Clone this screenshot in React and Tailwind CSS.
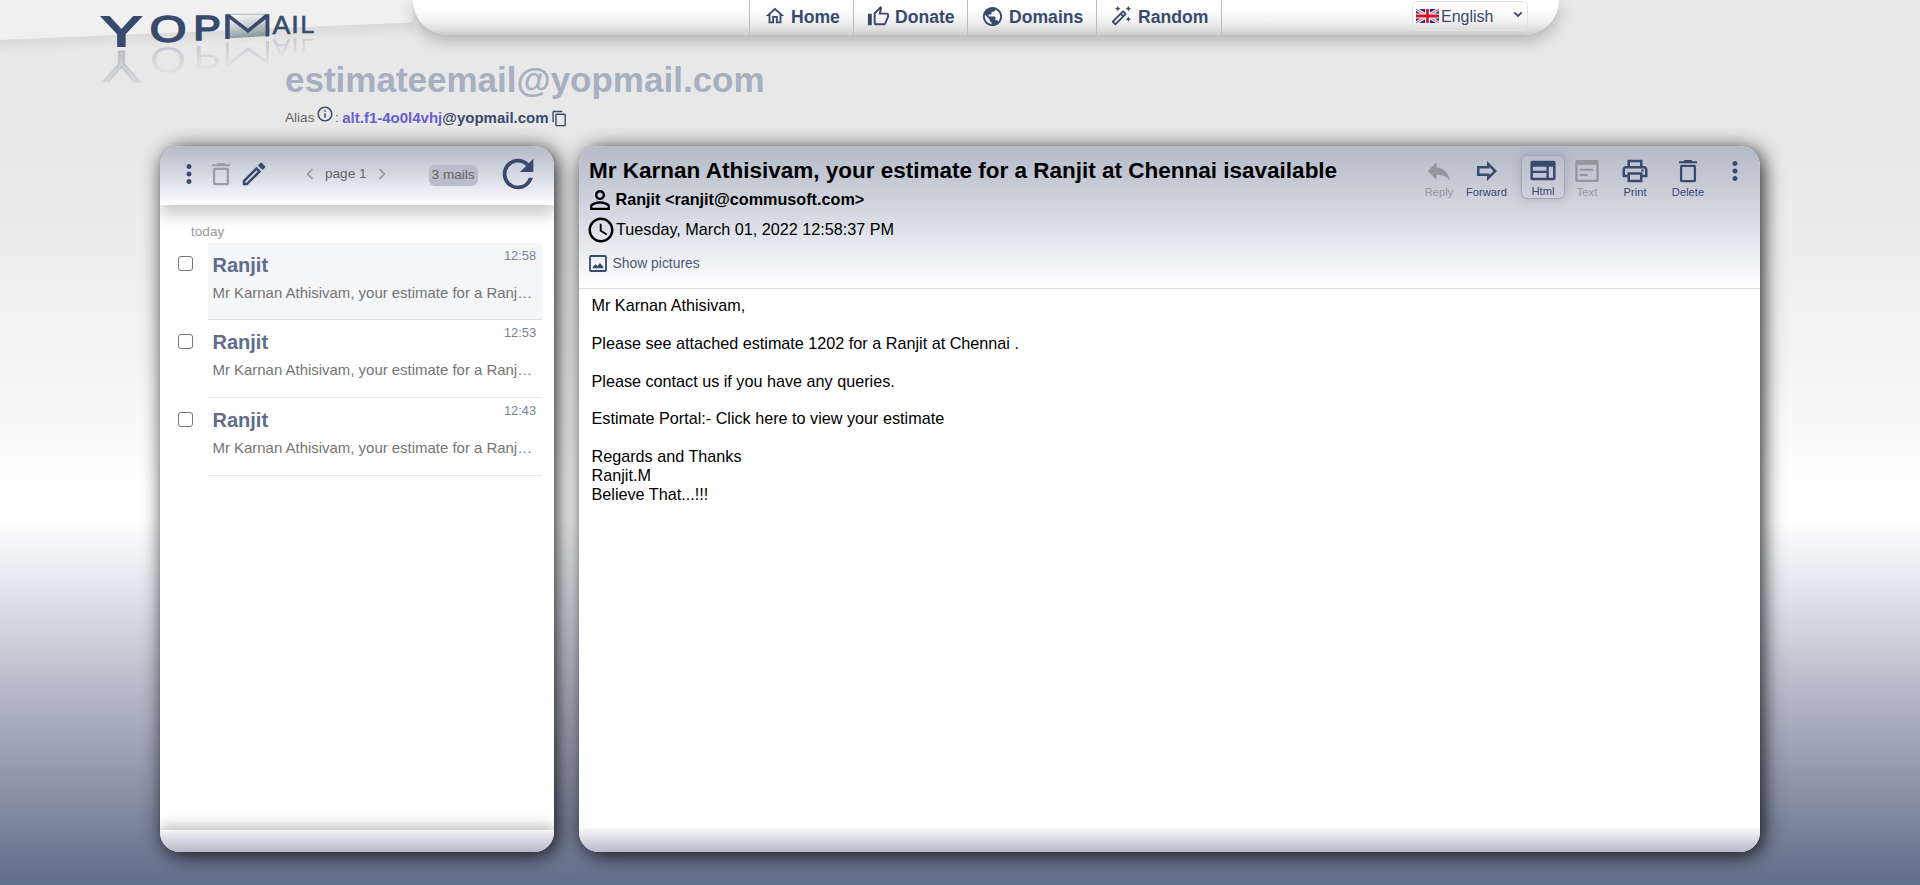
import React from "react";
import {
  MdOutlineHome,
  MdPublic,
  MdOutlineAutoFixHigh,
  MdMoreVert,
  MdOutlineEdit,
  MdChevronLeft,
  MdChevronRight,
  MdRefresh,
  MdOutlineInfo,
  MdContentCopy,
  MdPersonOutline,
  MdSchedule,
  MdReply,
  MdOutlineForward,
  MdOutlinePrint,
} from "react-icons/md";

const logoLetters = [
  { ch: "Y", x: 101.2, y: 45.5, size: 42, sx: 1.44, bold: false, stroke: 2, gap: 5, k: 1.05 },
  { ch: "O", x: 149.8, y: 42.3, size: 37, sx: 1.27, bold: false, stroke: 1.6, gap: 5, k: 0.98 },
  { ch: "P", x: 193.6, y: 40, size: 34.6, sx: 1.18, bold: false, stroke: 1.6, gap: 6, k: 0.9 },
  { ch: "A", x: 272.6, y: 34.4, size: 26, sx: 1.03, bold: false, stroke: 0.6, gap: 5, k: 0.9 },
  { ch: "I", x: 291.3, y: 33.4, size: 24.5, sx: 1.1, bold: false, stroke: 0.6, gap: 5, k: 0.9 },
  { ch: "L", x: 300.6, y: 32.5, size: 23.3, sx: 1.06, bold: false, stroke: 0.6, gap: 6, k: 0.9 },
];

function Logo() {
  return (
    <svg width="413" height="100" viewBox="0 0 413 100" className="block shrink-0" role="img" aria-label="YOPMail">
      <defs>
        <linearGradient id="edge" gradientUnits="userSpaceOnUse" x1="0" y1="40" x2="0.6" y2="54">
          <stop offset="0" stopColor="#dadada" />
          <stop offset="1" stopColor="#e8e8e8" />
        </linearGradient>
        <linearGradient id="mirror" x1="0" y1="0.8" x2="0" y2="0.1">
          <stop offset="0" stopColor="#7d879c" stopOpacity="0.3" />
          <stop offset="1" stopColor="#7d879c" stopOpacity="0.03" />
        </linearGradient>
        <linearGradient id="mirrorY" x1="0" y1="0.8" x2="0" y2="0.1">
          <stop offset="0" stopColor="#7d879c" stopOpacity="0.36" />
          <stop offset="1" stopColor="#7d879c" stopOpacity="0.12" />
        </linearGradient>
        <linearGradient id="mirrorM" gradientUnits="userSpaceOnUse" x1="0" y1="40" x2="0" y2="66">
          <stop offset="0" stopColor="#7d879c" stopOpacity="0.32" />
          <stop offset="1" stopColor="#7d879c" stopOpacity="0.06" />
        </linearGradient>
        <linearGradient id="paper" x1="0" y1="0" x2="0.3" y2="1">
          <stop offset="0" stopColor="#ffffff" />
          <stop offset="0.45" stopColor="#d3d7d9" />
          <stop offset="1" stopColor="#8f9a9c" />
        </linearGradient>
      </defs>
      <polygon points="0,0 413,0 413,22.5 0,40" fill="#f0f0f0" />
      <polygon points="0,40 413,22.5 413,38 0,55" fill="url(#edge)" />
      <g fontFamily="Liberation Sans, Arial, sans-serif">
        {logoLetters.map((l) => (
          <g key={l.ch}>
            <g
              fill="#384a6e"
              stroke="#384a6e"
              strokeWidth={l.stroke}
              transform={`translate(${l.x} ${l.y}) scale(${l.sx} 1)`}
            >
              <text id={"logo-" + l.ch} fontSize={l.size} fontWeight={l.bold ? 700 : 400}>
                {l.ch}
              </text>
            </g>
            <use
              href={"#logo-" + l.ch}
              fill={l.ch === "Y" ? "url(#mirrorY)" : "url(#mirror)"}
              stroke={l.ch === "Y" ? "url(#mirrorY)" : "none"}
              transform={`translate(${l.x} ${l.y + l.gap}) scale(${l.sx} ${-l.k})`}
            />
          </g>
        ))}
      </g>
      <polygon points="226,14.5 269,14.5 269,36 226,38.5" fill="url(#paper)" />
      <path d="M226 14.3H269" stroke="#9aa1a8" strokeWidth="0.8" />
      <path d="M225.2 39V14.3H229.5L248 28.8L265.3 14.3H269.4V36.3L265.6 36.6V19.3L248 32.9L229.7 19V38.8Z" fill="#384a6e" />
      <path d="M227.3 42.5V65L248 49L267.5 62.5V41" fill="none" stroke="url(#mirrorM)" strokeWidth="3" />
    </svg>
  );
}

function ThumbUp() {
  return (
    <svg width="23" height="23" viewBox="0 0 24 24" fill="currentColor">
      <path d="M9 21h9c.83 0 1.54-.5 1.84-1.22l3.02-7.05c.09-.23.14-.47.14-.73v-2c0-1.1-.9-2-2-2h-6.31l.95-4.57.03-.32c0-.41-.17-.79-.44-1.06L14.17 1 7.58 7.59C7.22 7.95 7 8.45 7 9v10c0 1.1.9 2 2 2zM9 9l4.34-4.34L12 10h9v2l-3 7H9V9zM1 9h4v12H1z" />
    </svg>
  );
}

function TrashIcon() {
  return (
    <svg width="30" height="30" viewBox="0 0 30 30" className="shrink-0">
      <path d="M11.5 4H18.5L19.5 5.200H24V7.300H6V5.200H10.500Z" fill="currentColor" />
      <rect x="8.100" y="9.900" width="13.800" height="15.200" rx="0.800" fill="none" stroke="currentColor" strokeWidth="2.300" />
    </svg>
  );
}

function HtmlIcon() {
  return (
    <svg width="30" height="30" viewBox="0 0 30 30" fill="currentColor">
      <path
        fillRule="evenodd"
        d="M4 5H26A2 2 0 0 1 28 7V23A2 2 0 0 1 26 25H4A2 2 0 0 1 2 23V7A2 2 0 0 1 4 5ZM4.600 11V15.200H18.600V11ZM4.600 17.500V22.500H18.600V17.500ZM21 11V22.500H25.400V11Z"
      />
    </svg>
  );
}

function TextIcon() {
  return (
    <svg width="30" height="30" viewBox="0 0 30 30" fill="currentColor">
      <path
        fillRule="evenodd"
        d="M5.300 4H24.700A2 2 0 0 1 26.700 6V24A2 2 0 0 1 24.700 26H5.300A2 2 0 0 1 3.300 24V6A2 2 0 0 1 5.300 4ZM5.600 8.800V23.800H24.400V8.800ZM7.700 12.700H21V14.800H7.700ZM7.700 17.900H15.700V20H7.700Z"
      />
    </svg>
  );
}

function PictureIcon() {
  return (
    <svg width="18" height="17" viewBox="0 0 18 17">
      <rect x="1" y="1" width="16" height="15" rx="1" fill="none" stroke="currentColor" strokeWidth="1.800" />
      <path d="M3.800 13.200V11.700L6.600 9.300L8.600 11L11 8L14.200 11.800V13.200Z" fill="currentColor" />
    </svg>
  );
}

function Flag() {
  return (
    <svg width="23" height="14" viewBox="0 0 24 14" preserveAspectRatio="none" className="shrink-0">
      <rect width="24" height="14" fill="#1d2f86" />
      <path d="M0 0L24 14M24 0L0 14" stroke="#fff" strokeWidth="3.200" />
      <path d="M0 0L24 14M24 0L0 14" stroke="#e0304a" strokeWidth="1" />
      <path d="M12 0V14M0 7H24" stroke="#fff" strokeWidth="5" />
      <path d="M12 0V14M0 7H24" stroke="#d80f2c" strokeWidth="2.800" />
    </svg>
  );
}

function NavItem({ icon, label, className }) {
  return (
    <a className={"flex h-[35px] items-start border-l border-[#bdbdbd] pt-[5px] " + className}>
      {icon}
      <span className="pt-[1px] text-[17.6px] font-bold leading-[23px]">{label}</span>
    </a>
  );
}

const mails = [
  { time: "12:58", active: true },
  { time: "12:53", active: false },
  { time: "12:43", active: false },
];

function MailRow({ time, active }) {
  return (
    <div className="flex h-[77.8px]">
      <div className="w-[48px] shrink-0 pl-[18px] pt-[13.5px]">
        <div className="h-[15px] w-[15px] rounded-[3px] border border-[#767676] bg-white" />
      </div>
      <div
        className={
          "flex w-[334px] items-start border-b pl-[4.5px] pr-[6px] " +
          (active ? "border-[#dadee3] bg-[#f4f6f8]" : "border-[#e4e6e8]")
        }
      >
        <div className="w-[291.5px] pt-[10px]">
          <div className="text-[20px] font-bold leading-[24px] text-[#5f6c8a]">Ranjit</div>
          <div className="mt-[6px] whitespace-nowrap text-[14.95px] leading-[20px] text-[#757575]">
            Mr Karnan Athisivam, your estimate for a Ranj…
          </div>
        </div>
        <div className="pt-[5px] text-[12.8px] leading-[16px] text-[#77809b]">{time}</div>
      </div>
    </div>
  );
}

function Action({ icon, label, className }) {
  return (
    <div className={"flex h-[44px] flex-col items-center " + className}>
      {icon}
      <span className="text-[11.2px] leading-[13px]">{label}</span>
    </div>
  );
}

const panel =
  "flex h-[706px] flex-col overflow-hidden rounded-[20px] bg-white shadow-[3px_3px_20px_rgba(0,0,0,0.88)]";

export default function App() {
  return (
    <div className="h-[885px] w-[1920px] overflow-hidden bg-[linear-gradient(to_bottom,#e8e8e8_0px,#e8e8e8_150px,#f3f3f3_350px,#ffffff_490px,#ffffff_520px,#eceef2_565px,#d7dae2_615px,#b0b6c5_700px,#8c94a9_785px,#78829b_830px,#626d89_885px)] font-['Liberation_Sans',Arial,sans-serif] text-[#384a6e]">
      <header className="flex h-[52px] items-start">
        <Logo />
        <nav className="relative flex h-[35px] w-[1146px] shrink-0 rounded-b-[35px] bg-[linear-gradient(to_bottom,#ffffff_0%,#fdfdfd_30%,#f2f2f2_60%,#e2e2e2_80%,#cbcbcb_100%)] pl-[336px] shadow-[0_6px_16px_rgba(0,0,0,0.24)]">
          <NavItem className="w-[104px] pl-[14px]" icon={<MdOutlineHome className="mr-[5px] h-[22px] w-[22px]" />} label="Home" />
          <NavItem className="w-[114px] pl-[13px]" icon={<span className="mr-[5px]"><ThumbUp /></span>} label="Donate" />
          <NavItem className="w-[129px] pl-[13px]" icon={<MdPublic className="mr-[5px] h-[23px] w-[23px]" />} label="Domains" />
          <NavItem className="w-[126px] border-r pl-[13px]" icon={<MdOutlineAutoFixHigh className="mr-[6px] h-[22px] w-[22px]" />} label="Random" />
          <div className="ml-[190px] mt-[1px] flex h-[30px] w-[116px] items-center rounded-[5px] border border-[#e2e2e2] pl-[3px]">
            <Flag />
            <span className="ml-[2px] mt-[1px] text-[16px] leading-[20px]">English</span>
            <svg width="10" height="7" viewBox="0 0 10 7" className="mb-[4px] ml-auto mr-[4px]">
              <path d="M1.300 1.300L5 5L8.700 1.300" fill="none" stroke="currentColor" strokeWidth="1.800" />
            </svg>
          </div>
        </nav>
      </header>

      <div className="h-[94px] pl-[285px] pt-[8px]">
        <div className="text-[35px] font-bold leading-[40px] text-[#a7afc1]">estimateemail@yopmail.com</div>
        <div className="mt-[7px] flex h-[22px] items-center whitespace-nowrap text-[#666]">
          <span className="text-[13.6px]">Alias</span>
          <MdOutlineInfo className="mb-[8px] ml-[1.5px] h-[18px] w-[18px] text-[#384a6e]" />
          <span className="ml-[1px] text-[13.6px]">:</span>
          <span className="ml-[3.5px] text-[15px] font-bold text-[#6a5fd0]">
            alt.f1-4o0l4vhj<span className="text-[#384a6e]">@yopmail.com</span>
          </span>
          <MdContentCopy className="ml-[2px] h-[17px] w-[17px] text-[#384a6e]" />
        </div>
      </div>

      <main className="flex gap-[25px] pl-[160px]">
        <section className={panel + " w-[394px] shrink-0"}>
          <div className="relative flex h-[59px] shrink-0 items-center bg-[linear-gradient(to_bottom,#b4bac8,#d7dae3_50%,#ffffff)] pb-[3px] pl-[14px] shadow-[0_10px_14px_rgba(0,0,0,0.2)]">
            <MdMoreVert className="h-[30px] w-[30px]" />
            <span className="ml-[2px] text-[#9a9da3]"><TrashIcon /></span>
            <MdOutlineEdit className="ml-[3px] h-[30px] w-[30px]" />
            <MdChevronLeft className="ml-[30px] h-[22px] w-[22px] text-[#9a9da3]" />
            <span className="ml-[4px] text-[13.6px] text-[#666]">page 1</span>
            <MdChevronRight className="ml-[4px] h-[22px] w-[22px] text-[#9a9da3]" />
            <span className="ml-[36px] mt-[3px] flex h-[21px] w-[49px] items-center justify-center whitespace-nowrap rounded-[6px] bg-[#b7bdca] text-[13.6px] text-[#666]">
              3 mails
            </span>
            <MdRefresh className="ml-[17.5px] h-[46px] w-[46px]" />
          </div>
          <div className="flex-1">
            <div className="h-[37.5px] pl-[31px] pt-[17.5px] text-[13.6px] leading-[18px] text-[#999]">today</div>
            {mails.map((m) => (
              <MailRow key={m.time} {...m} />
            ))}
          </div>
          <div className="h-[22px] shrink-0 bg-[linear-gradient(to_bottom,#f6f6f7,#d7dae3_45%,#b4bac8)] shadow-[0_-3px_14px_rgba(0,0,0,0.3)]" />
        </section>

        <section className={panel + " w-[1181px] shrink-0"}>
          <div className="flex h-[143px] shrink-0 justify-between border-b border-[#dadbdd] bg-[linear-gradient(to_bottom,#b4bac8,#d7dae3_50%,#ffffff)]">
            <div className="pl-[9px] pt-[11px] text-black">
              <h1 className="whitespace-nowrap pl-[1px] text-[22.5px] font-bold leading-[28px]">
                Mr Karnan Athisivam, your estimate for a Ranjit at Chennai isavailable
              </h1>
              <div className="flex h-[30px] items-center">
                <MdPersonOutline className="-ml-[3px] h-[30px] w-[30px]" />
                <span className="mb-[2px] ml-[0.5px] text-[16.2px] font-bold">Ranjit &lt;ranjit@commusoft.com&gt;</span>
              </div>
              <div className="flex h-[30px] items-center">
                <MdSchedule className="-ml-[2.5px] h-[30px] w-[30px]" />
                <span className="mb-[2px] ml-[0.5px] text-[16.2px]">Tuesday, March 01, 2022 12:58:37 PM</span>
              </div>
              <div className="mt-[9px] flex h-[18px] items-center text-[#4b5876]">
                <span className="ml-[1px] text-[#384a6e]"><PictureIcon /></span>
                <span className="ml-[5.5px] mt-[1px] text-[13.9px]">Show pictures</span>
              </div>
            </div>
            <div className="flex items-start pr-[10px] pt-[9px]">
              <Action className="w-[46px] pt-[1px] text-[#92969f]" icon={<MdReply className="h-[30px] w-[30px]" />} label="Reply" />
              <Action className="ml-[0.5px] w-[48px] pt-[1px]" icon={<MdOutlineForward className="h-[30px] w-[30px]" />} label="Forward" />
              <Action
                className="ml-[10.5px] w-[44px] rounded-[6px] border border-[#a0a6b3] shadow-[0_0_10px_rgba(56,74,110,0.25)]"
                icon={<HtmlIcon />}
                label="Html"
              />
              <Action className="w-[44px] pt-[1px] text-[#92969f]" icon={<TextIcon />} label="Text" />
              <Action className="ml-[4px] w-[44px] pt-[1px]" icon={<MdOutlinePrint className="h-[30px] w-[30px]" />} label="Print" />
              <Action className="ml-[9px] w-[44px] pt-[1px]" icon={<TrashIcon />} label="Delete" />
              <MdMoreVert className="ml-[10px] mt-[1px] h-[30px] w-[30px]" />
            </div>
          </div>
          <div className="flex-1 whitespace-pre-line pl-[12.5px] pt-[7px] text-[16.2px] leading-[18.9px] text-black">
            {"Mr Karnan Athisivam,\n\nPlease see attached estimate 1202 for a Ranjit at Chennai .\n\nPlease contact us if you have any queries.\n\nEstimate Portal:- Click here to view your estimate\n\nRegards and Thanks\nRanjit.M\nBelieve That...!!!"}
          </div>
          <div className="h-[24px] shrink-0 bg-[linear-gradient(to_bottom,#f8f8f9,#d7dae3_50%,#b4bac8)]" />
        </section>
      </main>
    </div>
  );
}
